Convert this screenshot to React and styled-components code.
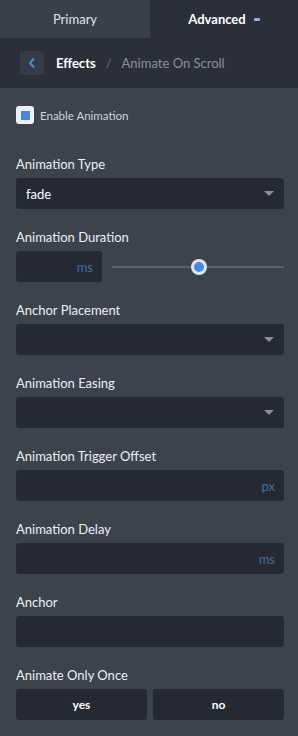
import React from "react";
import styled, { createGlobalStyle } from "styled-components";

const Global = createGlobalStyle`
  html, body { margin: 0; padding: 0; background: #3d434b; }
  body { font-family: Lato, "Open Sans", sans-serif; -webkit-font-smoothing: antialiased; }
  * { box-sizing: border-box; }
`;

const Panel = styled.div`
  width: 298px;
  min-height: 736px;
  background: #3d434b;
  color: #e8ebee;
`;

const Tabs = styled.div`
  display: grid;
  grid-template-columns: 150px 148px;
  height: 38px;
`;

const Tab = styled.div`
  display: flex;
  align-items: center;
  justify-content: center;
  gap: 8px;
  font-size: 13px;
  font-weight: ${(p) => (p.$active ? 700 : 400)};
  color: ${(p) => (p.$active ? "#ffffff" : "#dfe3e8")};
  background: ${(p) => (p.$active ? "#2b3038" : "#3a4049")};
`;

const Badge = styled.span`
  width: 6px;
  height: 3px;
  border-radius: 1px;
  background: #8fb3dc;
  margin-top: 1px;
`;

const Crumbs = styled.div`
  height: 50px;
  background: #2b3038;
  display: flex;
  align-items: center;
  padding-left: 20px;
  font-size: 13px;
`;

const BackBtn = styled.div`
  width: 24px;
  height: 24px;
  border-radius: 2px;
  background: #363c45;
  display: flex;
  align-items: center;
  justify-content: center;
  margin-right: 12px;
`;

const CrumbMain = styled.span`
  font-weight: 700;
  color: #ffffff;
`;

const Sep = styled.span`
  color: #6c727a;
  margin: 0 10px;
`;

const CrumbSub = styled.span`
  color: #8a9098;
`;

const Body = styled.div`
  padding: 18px 14px 0 16px;
  display: flex;
  flex-direction: column;
`;

const CheckRow = styled.label`
  display: flex;
  align-items: center;
  gap: 6px;
  font-size: 11.5px;
  color: #cfd4da;
  height: 18px;
  margin-bottom: 31px;
`;

const CheckBox = styled.span`
  width: 18px;
  height: 18px;
  border-radius: 3px;
  background: #eef2f7;
  display: flex;
  align-items: center;
  justify-content: center;
  &::after {
    content: "";
    width: 9px;
    height: 9px;
    background: #3a8ee6;
  }
`;

const Field = styled.div`
  display: flex;
  flex-direction: column;
  margin-bottom: 19px;
`;

const Label = styled.div`
  font-size: 13px;
  line-height: 18px;
  height: 18px;
  margin-bottom: 5px;
  color: #eceff2;
`;

const Control = styled.div`
  height: 31px;
  border-radius: 3px;
  background: #252a32;
  display: flex;
  align-items: center;
  justify-content: ${(p) => (p.$end ? "flex-end" : "space-between")};
  padding: 0 9px 0 10px;
  font-size: 13px;
  color: #ffffff;
  width: ${(p) => p.$w || "auto"};
`;

const Arrow = styled.span`
  width: 0;
  height: 0;
  border-left: 5px solid transparent;
  border-right: 5px solid transparent;
  border-top: 5px solid #8a9099;
  margin-left: auto;
  margin-right: 1px;
`;

const Unit = styled.span`
  color: #3d6fa6;
  font-size: 13px;
`;

const DurationRow = styled.div`
  display: flex;
  align-items: center;
  gap: 10px;
`;

const Slider = styled.div`
  position: relative;
  flex: 1;
  height: 31px;
  display: flex;
  align-items: center;
`;

const Track = styled.div`
  width: 100%;
  height: 2px;
  background: #5a6069;
`;

const Thumb = styled.div`
  position: absolute;
  left: 79px;
  top: 50%;
  width: 16px;
  height: 16px;
  margin-top: -8px;
  border-radius: 50%;
  background: #e3e7eb;
  display: flex;
  align-items: center;
  justify-content: center;
  &::after {
    content: "";
    width: 10px;
    height: 10px;
    border-radius: 50%;
    background: #3a8ee6;
  }
`;

const Buttons = styled.div`
  display: grid;
  grid-template-columns: 1fr 1fr;
  gap: 6px;
`;

const Btn = styled.div`
  height: 31px;
  border-radius: 3px;
  background: #252a32;
  display: flex;
  align-items: center;
  justify-content: center;
  font-size: 12px;
  font-weight: 700;
  color: #ffffff;
`;

function Select({ value }) {
  return (
    <Control>
      {value && <span>{value}</span>}
      <Arrow />
    </Control>
  );
}

export default function App() {
  return (
    <Panel>
      <Global />
      <Tabs>
        <Tab>Primary</Tab>
        <Tab $active>
          Advanced
          <Badge />
        </Tab>
      </Tabs>
      <Crumbs>
        <BackBtn>
          <svg width="10" height="12" viewBox="0 0 10 12">
            <path d="M6.5 2 L3 6 L6.5 10" fill="none" stroke="#3f8ee0" strokeWidth="2" strokeLinecap="round" strokeLinejoin="round" />
          </svg>
        </BackBtn>
        <CrumbMain>Effects</CrumbMain>
        <Sep>/</Sep>
        <CrumbSub>Animate On Scroll</CrumbSub>
      </Crumbs>
      <Body>
        <CheckRow>
          <CheckBox />
          Enable Animation
        </CheckRow>
        <Field>
          <Label>Animation Type</Label>
          <Select value="fade" />
        </Field>
        <Field>
          <Label>Animation Duration</Label>
          <DurationRow>
            <Control $end $w="86px">
              <Unit>ms</Unit>
            </Control>
            <Slider>
              <Track />
              <Thumb />
            </Slider>
          </DurationRow>
        </Field>
        <Field>
          <Label>Anchor Placement</Label>
          <Select />
        </Field>
        <Field>
          <Label>Animation Easing</Label>
          <Select />
        </Field>
        <Field>
          <Label>Animation Trigger Offset</Label>
          <Control $end>
            <Unit>px</Unit>
          </Control>
        </Field>
        <Field>
          <Label>Animation Delay</Label>
          <Control $end>
            <Unit>ms</Unit>
          </Control>
        </Field>
        <Field>
          <Label>Anchor</Label>
          <Control />
        </Field>
        <Field>
          <Label>Animate Only Once</Label>
          <Buttons>
            <Btn>yes</Btn>
            <Btn>no</Btn>
          </Buttons>
        </Field>
      </Body>
    </Panel>
  );
}
